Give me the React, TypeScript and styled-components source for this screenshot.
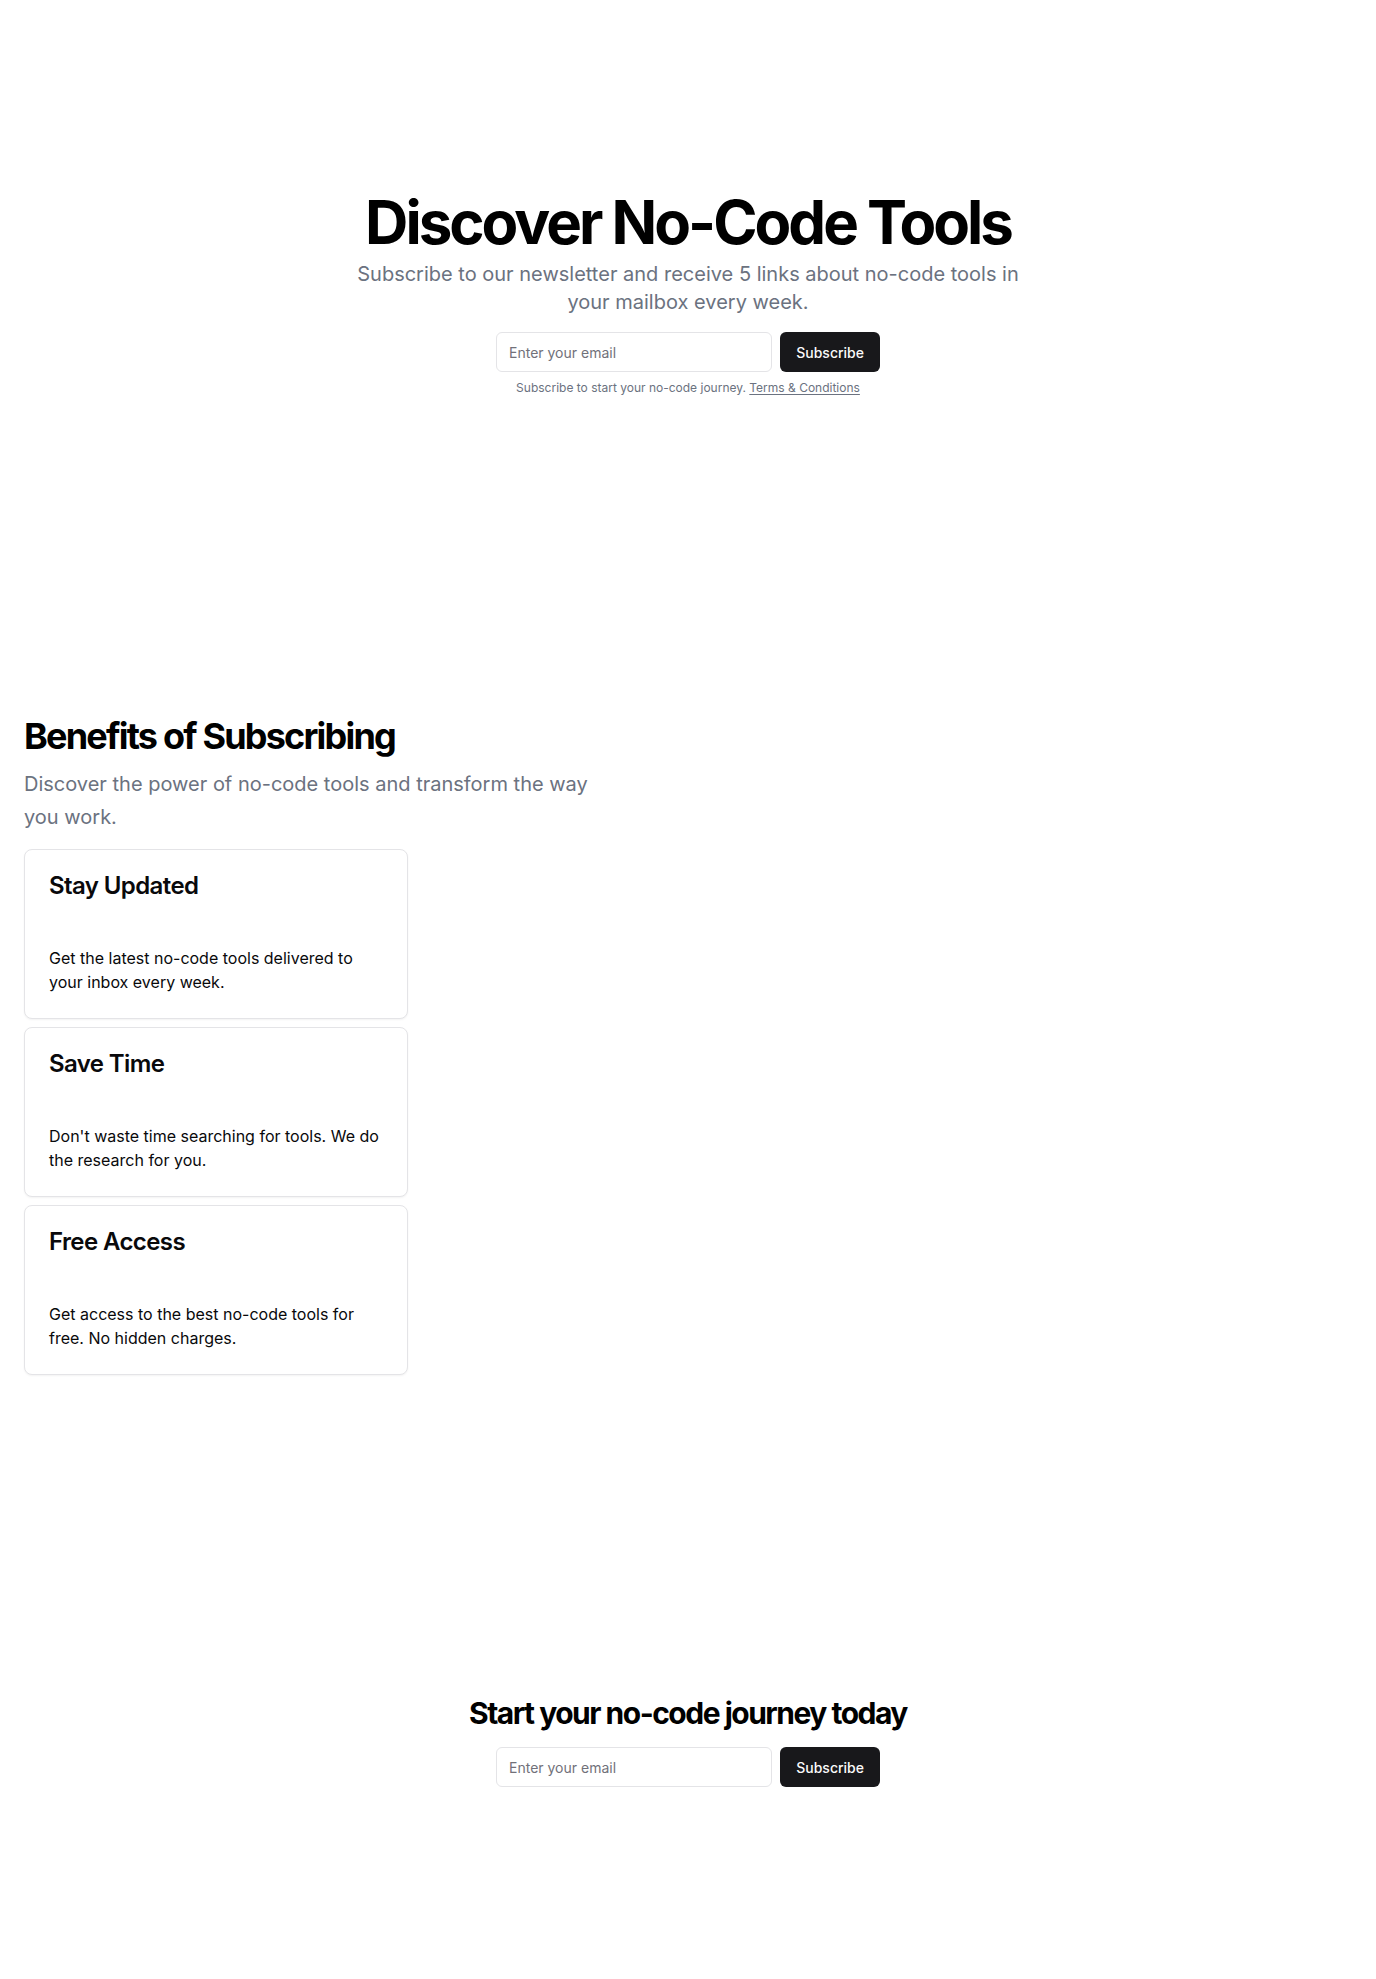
import styled, { createGlobalStyle } from 'styled-components'

const GlobalStyle = createGlobalStyle`
	* {
		box-sizing: border-box;
	}
	body {
		margin: 0;
		background: #ffffff;
		color: #09090b;
		font-family: Inter, 'Noto Sans', 'Liberation Sans', sans-serif;
		-webkit-font-smoothing: antialiased;
	}
`

const Page = styled.main`
	display: flex;
	flex-direction: column;
	min-height: 100vh;
	width: 100%;
`

const Section = styled.section<{ $top: number; $bottom: number }>`
	width: 100%;
	padding: ${(p) => p.$top}px 24px ${(p) => p.$bottom}px;
`

const Centered = styled.div`
	display: flex;
	flex-direction: column;
	align-items: center;
	text-align: center;
	gap: 16px;
`

const Stack = styled.div<{ $gap: number }>`
	display: flex;
	flex-direction: column;
	align-items: center;
	gap: ${(p) => p.$gap}px;
`

const HeroTitle = styled.h1`
	margin: 0;
	font-size: 60px;
	line-height: 1;
	font-weight: 700;
	letter-spacing: -0.05em;
	color: #000000;
`

const HeroText = styled.p`
	margin: 0 auto;
	max-width: 700px;
	font-size: 20px;
	line-height: 28px;
	color: #6b7280;
`

const Form = styled.form`
	display: flex;
	gap: 8px;
	width: 384px;
`

const EmailInput = styled.input`
	flex: 1;
	min-width: 0;
	height: 40px;
	padding: 0 12px;
	border: 1px solid #e4e4e7;
	border-radius: 6px;
	background: #ffffff;
	font-family: inherit;
	font-size: 14px;
	color: #09090b;
	outline: none;

	&::placeholder {
		color: #71717a;
	}
`

const SubscribeButton = styled.button`
	height: 40px;
	padding: 0 16px;
	border: none;
	border-radius: 6px;
	background: #18181b;
	color: #fafafa;
	font-family: inherit;
	font-size: 14px;
	font-weight: 500;
	cursor: pointer;
`

const Fine = styled.p`
	margin: 0;
	font-size: 12px;
	line-height: 16px;
	color: #6b7280;

	a {
		color: inherit;
		text-decoration: underline;
		text-underline-offset: 2px;
	}
`

const Benefits = styled.div`
	display: flex;
	flex-direction: column;
	align-items: flex-start;
`

const SectionTitle = styled.h2<{ $size: number; $line: number }>`
	margin: 0;
	font-size: ${(p) => p.$size}px;
	line-height: ${(p) => p.$line}px;
	font-weight: 700;
	letter-spacing: -0.05em;
	color: #000000;
`

const Lead = styled.p`
	margin: 12px 0 0;
	max-width: 600px;
	font-size: 20px;
	line-height: 1.625;
	color: #6b7280;
`

const CardList = styled.div`
	display: grid;
	gap: 8px;
	width: 384px;
	margin-top: 16px;
`

const Card = styled.div`
	border: 1px solid #e4e4e7;
	border-radius: 8px;
	background: #ffffff;
	box-shadow: 0 1px 2px 0 rgba(0, 0, 0, 0.05);
	padding: 24px;
`

const CardTitle = styled.h3`
	margin: 0;
	font-size: 24px;
	line-height: 1;
	font-weight: 600;
	letter-spacing: -0.025em;
	color: #09090b;
`

const CardText = styled.p`
	margin: 48px 0 0;
	font-size: 16px;
	line-height: 24px;
	color: #09090b;
`

const benefits = [
	{
		title: 'Stay Updated',
		text: 'Get the latest no-code tools delivered to your inbox every week.',
	},
	{
		title: 'Save Time',
		text: "Don't waste time searching for tools. We do the research for you.",
	},
	{
		title: 'Free Access',
		text: 'Get access to the best no-code tools for free. No hidden charges.',
	},
]

function SignupForm() {
	return (
		<Form onSubmit={(e) => e.preventDefault()}>
			<EmailInput type='email' placeholder='Enter your email' />
			<SubscribeButton type='submit'>Subscribe</SubscribeButton>
		</Form>
	)
}

export default function App() {
	return (
		<>
			<GlobalStyle />
			<Page>
				<Section $top={192} $bottom={192}>
					<Centered>
						<Stack $gap={8}>
							<HeroTitle>Discover No-Code Tools</HeroTitle>
							<HeroText>
								Subscribe to our newsletter and receive 5 links about
								no-code tools in your mailbox every week.
							</HeroText>
						</Stack>
						<Stack $gap={8}>
							<SignupForm />
							<Fine>
								Subscribe to start your no-code journey.{' '}
								<a href='#'>Terms &amp; Conditions</a>
							</Fine>
						</Stack>
					</Centered>
				</Section>
				<Section $top={128} $bottom={128}>
					<Benefits>
						<SectionTitle $size={36} $line={40}>
							Benefits of Subscribing
						</SectionTitle>
						<Lead>
							Discover the power of no-code tools and transform the way
							you work.
						</Lead>
						<CardList>
							{benefits.map((b) => (
								<Card key={b.title}>
									<CardTitle>{b.title}</CardTitle>
									<CardText>{b.text}</CardText>
								</Card>
							))}
						</CardList>
					</Benefits>
				</Section>
				<Section $top={192} $bottom={192}>
					<Centered>
						<SectionTitle $size={30} $line={36}>
							Start your no-code journey today
						</SectionTitle>
						<SignupForm />
					</Centered>
				</Section>
			</Page>
		</>
	)
}
